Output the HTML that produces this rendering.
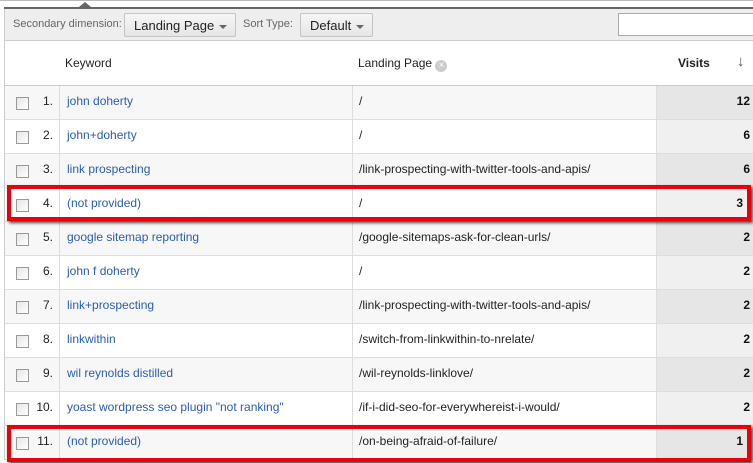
<!DOCTYPE html>
<html><head><style>
*{margin:0;padding:0;box-sizing:border-box}
body{width:753px;height:463px;overflow:hidden;background:#fff;font-family:"Liberation Sans",Arial,sans-serif;font-size:12px;position:relative}
.topline{position:absolute;left:0;top:0;width:753px;height:1px;background:#bbb}
.bar{position:absolute;left:4px;top:7px;width:749px;height:2px;background:#666}
.tri{position:absolute;left:79px;top:2px;width:0;height:0;border-left:6px solid transparent;border-right:6px solid transparent;border-bottom:5px solid #666}
.tool{position:absolute;left:4px;top:9px;width:749px;height:32px;background:#eee;border-left:1px solid #ccc;border-bottom:1px solid #ccc}
.lbl{position:absolute;top:18px;color:#666;font-size:11px}
.btn{position:absolute;top:13px;height:24px;border:1px solid #c4c4c4;border-radius:2px;background:linear-gradient(#f6f6f6,#e6e6e6);font-size:13px;color:#222;padding:4px 0 0 9px}
.btn i{position:absolute;right:8px;top:11px;border-left:4px solid transparent;border-right:4px solid transparent;border-top:4px solid #666}
.search{position:absolute;left:618px;top:13px;width:140px;height:23px;border:1px solid #aaa;background:#fff}
.head{position:absolute;left:4px;top:41px;width:749px;height:45px;border-left:1px solid #ccc;border-bottom:1px solid #ccc;background:#fff}
.h{position:absolute;top:56px;font-size:12px;color:#222}
.row{position:absolute;left:4px;width:749px;height:34px;border-left:1px solid #ccc;border-bottom:1px solid #ddd}
.row div{position:absolute;top:0;height:33px;line-height:31px}
.cb{left:11px!important;top:11px!important;width:13px;height:13px!important;border:1px solid #999;background:linear-gradient(135deg,#e6e6e6,#fff)}
.num{left:20px;width:28px;text-align:right;color:#222}
.kw{left:54px;width:293px;border-left:1px solid #ddd;padding-left:7px;color:#2a5db0}
.lp{left:347px;width:304px;border-left:1px solid #ddd;padding-left:6px;color:#222}
.vi{left:651px;width:98px;border-left:1px solid #ddd;text-align:right;padding-right:4px;color:#111;font-weight:bold}
.red{position:absolute;border:4px solid #e8000a;box-shadow:2px 2px 3px rgba(0,0,0,.7)}
</style></head><body>
<div class="topline"></div>
<div class="bar"></div><div class="tri"></div>
<div class="tool"></div>
<div class="lbl" style="left:13px">Secondary dimension:</div>
<div class="btn" style="left:124px;width:112px">Landing Page<i></i></div>
<div class="lbl" style="left:243px">Sort Type:</div>
<div class="btn" style="left:300px;width:73px">Default<i></i></div>
<div class="search"></div>
<div class="head"></div>
<div class="h" style="left:65px">Keyword</div>
<div class="h" style="left:358px">Landing Page <span style="display:inline-block;width:12px;height:12px;border-radius:6px;background:#ccc;color:#fff;font-size:10px;line-height:12px;text-align:center;vertical-align:-1px">×</span></div>
<div class="h" style="left:678px;font-weight:bold">Visits</div>
<div class="h" style="left:737px;color:#555;font-size:15px;top:53px;font-weight:bold">↓</div>

<div class="row" style="top:86px;background:#f7f7f7"><div class="cb"></div><div class="num">1.</div><div class="kw">john doherty</div><div class="lp">/</div><div class="vi" style="background:#e6e6e6">12</div></div>
<div class="row" style="top:120px"><div class="cb"></div><div class="num">2.</div><div class="kw">john+doherty</div><div class="lp">/</div><div class="vi" style="background:#f0f0f0">6</div></div>
<div class="row" style="top:154px;background:#f7f7f7"><div class="cb"></div><div class="num">3.</div><div class="kw">link prospecting</div><div class="lp">/link-prospecting-with-twitter-tools-and-apis/</div><div class="vi" style="background:#e6e6e6">6</div></div>
<div class="row" style="top:188px"><div class="cb"></div><div class="num">4.</div><div class="kw">(not provided)</div><div class="lp">/</div><div class="vi" style="background:#f0f0f0;padding-right:11px">3</div></div>
<div class="row" style="top:222px;background:#f7f7f7"><div class="cb"></div><div class="num">5.</div><div class="kw">google sitemap reporting</div><div class="lp">/google-sitemaps-ask-for-clean-urls/</div><div class="vi" style="background:#e6e6e6">2</div></div>
<div class="row" style="top:256px"><div class="cb"></div><div class="num">6.</div><div class="kw">john f doherty</div><div class="lp">/</div><div class="vi" style="background:#f0f0f0">2</div></div>
<div class="row" style="top:290px;background:#f7f7f7"><div class="cb"></div><div class="num">7.</div><div class="kw">link+prospecting</div><div class="lp">/link-prospecting-with-twitter-tools-and-apis/</div><div class="vi" style="background:#e6e6e6">2</div></div>
<div class="row" style="top:324px"><div class="cb"></div><div class="num">8.</div><div class="kw">linkwithin</div><div class="lp">/switch-from-linkwithin-to-nrelate/</div><div class="vi" style="background:#f0f0f0">2</div></div>
<div class="row" style="top:358px;background:#f7f7f7"><div class="cb"></div><div class="num">9.</div><div class="kw">wil reynolds distilled</div><div class="lp">/wil-reynolds-linklove/</div><div class="vi" style="background:#e6e6e6">2</div></div>
<div class="row" style="top:392px"><div class="cb"></div><div class="num">10.</div><div class="kw">yoast wordpress seo plugin "not ranking"</div><div class="lp">/if-i-did-seo-for-everywhereist-i-would/</div><div class="vi" style="background:#f0f0f0">2</div></div>
<div class="row" style="top:426px;background:#f7f7f7"><div class="cb"></div><div class="num">11.</div><div class="kw">(not provided)</div><div class="lp">/on-being-afraid-of-failure/</div><div class="vi" style="background:#e6e6e6;padding-right:11px">1</div></div>

<div class="red" style="left:7px;top:185px;width:744px;height:36px"></div>
<div class="red" style="left:7px;top:425px;width:744px;height:37px"></div>
</body></html>
